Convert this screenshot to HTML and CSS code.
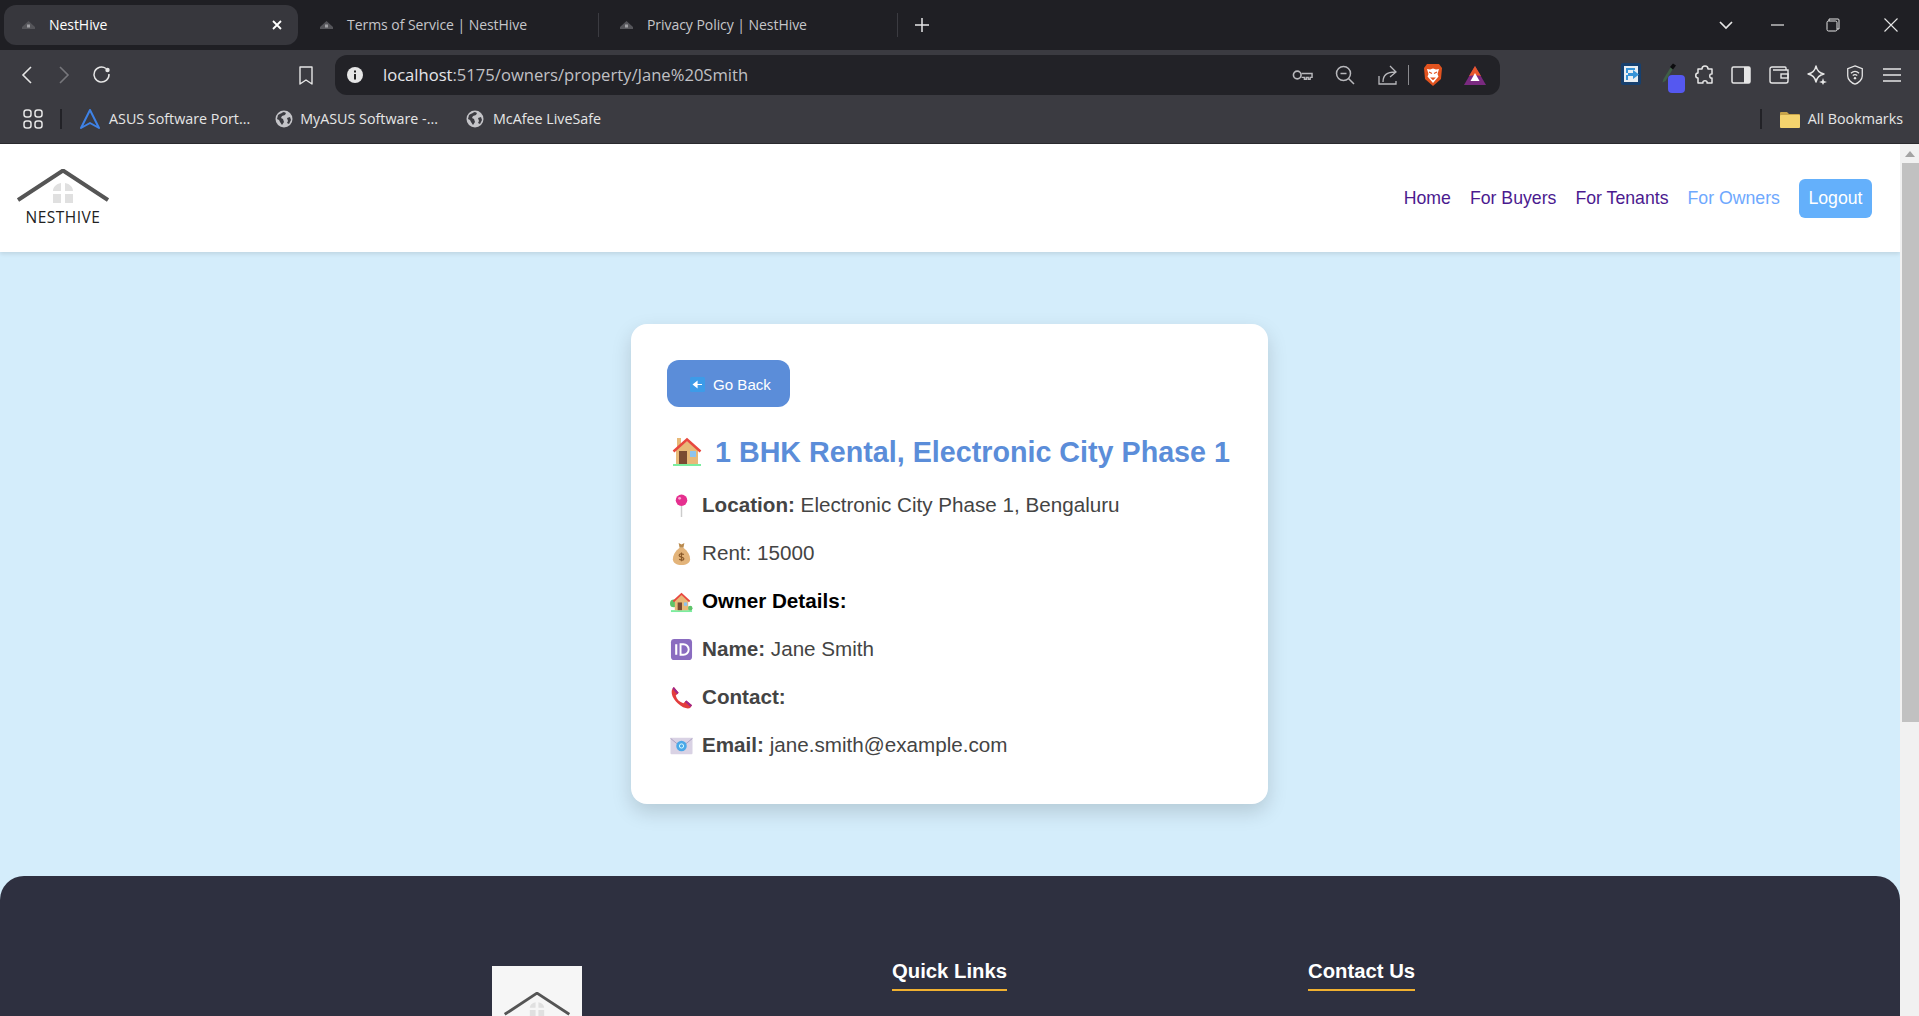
FILE: index.html
```html
<!DOCTYPE html>
<html>
<head>
	<meta charset="utf-8">
	<title>NestHive</title>
	<link rel="stylesheet" href="styles.css">
</head>
<body>
	<svg class="defs" width="0" height="0">
		<symbol id="fav" viewBox="0 0 13 10">
			<path d="M0 7 6.500 1 13 7v2H0z" fill="#55555a"/>
			<rect x="5" y="4.500" width="3" height="3" fill="#a0a0a4"/>
		</symbol>
		<symbol id="globe" viewBox="0 0 18 18">
			<circle cx="9" cy="9" r="8.5" fill="#c4c4c8"/>
			<path d="M3 5c2-1 5-3 6-3l2 1-1 2-3 1-1 2 2 1 1 3-2 3-2-3-1-2-2-1zM12 8l3-1 1 3-2 4-2-1 1-2z" fill="#3b3b41"/>
		</symbol>
		<symbol id="roof" viewBox="0 0 92 36">
			<path d="M1 31 46 1.500l45 29.500" fill="none" stroke="#555" stroke-width="4"/>
			<path d="M36 22c0-4 3-7 8-8v8zM48 14c5 1 8 4 8 8h-8zM36 25h8v9h-8zM48 25h8v9h-8z" fill="#e0e0e0"/>
		</symbol>
	</svg>

	<!-- browser chrome -->
	<div class="tabstrip">
		<div class="tab tab-active">
			<svg class="fav"><use href="#fav"/></svg>
			<span class="tab-title">NestHive</span>
			<svg class="tab-x" viewBox="0 0 10 10"><path d="M1 1l8 8M9 1l-8 8" stroke="#fff" stroke-width="1.8"/></svg>
		</div>
		<div class="tab tab-one">
			<svg class="fav"><use href="#fav"/></svg>
			<span class="tab-title">Terms of Service | NestHive</span>
		</div>
		<div class="tab tab-two">
			<svg class="fav"><use href="#fav"/></svg>
			<span class="tab-title">Privacy Policy | NestHive</span>
		</div>
		<svg class="newtab" viewBox="0 0 14 14"><path d="M7 0v14M0 7h14" stroke="#e6e6e6" stroke-width="1.5"/></svg>
		<svg class="win win-chev" viewBox="0 0 14 10"><path d="M1 2l6 6 6-6" fill="none" stroke="#e6e6e6" stroke-width="1.7"/></svg>
		<svg class="win win-min" viewBox="0 0 14 10"><path d="M0 5h13" stroke="#e6e6e6" stroke-width="1.2"/></svg>
		<svg class="win win-res" viewBox="0 0 14 14"><path d="M3 3V1h9a1 1 0 0 1 1 1v9h-2" fill="none" stroke="#e6e6e6"/><rect x="1" y="3" width="10" height="10" rx="1.5" fill="none" stroke="#e6e6e6"/></svg>
		<svg class="win win-close" viewBox="0 0 14 14"><path d="M.5.5l13 13M13.500.5l-13 13" stroke="#e6e6e6" stroke-width="1.1"/></svg>
	</div>

	<div class="toolbar">
		<svg class="nav-ico nav-back" viewBox="0 0 12 20"><path d="M10 2 2 10l8 8" fill="none" stroke="#e6e6e6" stroke-width="1.6"/></svg>
		<svg class="nav-ico nav-fwd" viewBox="0 0 12 20"><path d="M2 2l8 8-8 8" fill="none" stroke="#77777c" stroke-width="1.6"/></svg>
		<svg class="nav-reload" viewBox="0 0 20 20"><path d="M17 9a7.500 7.500 0 1 1-3-5.500" fill="none" stroke="#e6e6e6" stroke-width="1.5"/><circle cx="15.500" cy="5" r="2.200" fill="#e6e6e6"/></svg>
		<svg class="nav-mark" viewBox="0 0 14 19"><path d="M1 1h12v17l-6-4-6 4z" fill="none" stroke="#e6e6e6" stroke-width="1.4" stroke-linejoin="round"/></svg>
		<div class="urlbar">
			<svg class="url-info" viewBox="0 0 18 18"><circle cx="9" cy="9" r="8" fill="#e6e6e6"/><path d="M9 8v5.500M9 4.500v2" stroke="#222" stroke-width="2"/></svg>
			<span class="url-text"><span class="url-host">localhost</span>:5175/owners/property/Jane%20Smith</span>
			<svg class="url-ico url-key" viewBox="0 0 22 14"><circle cx="5.500" cy="7" r="4" fill="none" stroke="#b8b8bc" stroke-width="1.7"/><path d="M10 5.500h11v4h-2v2h-2v-2h-2v2h-2v-2h-3" fill="none" stroke="#b8b8bc" stroke-width="1.500"/></svg>
			<svg class="url-ico url-zoom" viewBox="0 0 20 20"><circle cx="8.500" cy="8.500" r="7" fill="none" stroke="#b8b8bc" stroke-width="1.500"/><path d="M5.500 8.500h6M13.500 13.500l5.500 5.500" stroke="#b8b8bc" stroke-width="1.500"/></svg>
			<svg class="url-ico url-share" viewBox="0 0 20 20"><path d="M1 11v8h17v-3" fill="none" stroke="#b8b8bc" stroke-width="1.300"/><path d="M5 17c0-7 4-10 12-10M12 1l6 6-6 5" fill="none" stroke="#b8b8bc" stroke-width="1.300"/></svg>
			<span class="url-sep"></span>
			<svg class="url-brave" viewBox="0 0 20 24"><path d="M4 1h12l3 4-1 11-8 7-8-7L1 5z" fill="#e2531f"/><path d="M4 6l3 .500 3-1 3 1 3-.500-1.500 5 1 2.500L10 20l-5.500-6.500 1-2.500z" fill="#fff"/><path d="M6 9l3 1.500M14 9l-3 1.500M8.500 15h3l-1.500 1.500z" stroke="#e2531f" stroke-width="1.200" fill="#e2531f"/></svg>
			<svg class="url-bat" viewBox="0 0 22 20"><path d="M11 1l11 19H0z" fill="#7a2a80"/><path d="M11 1 5 11l6-1 6 1z" fill="#e8572a"/><path d="M11 8l4.500 8h-9z" fill="#fff"/></svg>
		</div>
		<svg class="ext ext-one" viewBox="0 0 20 22"><rect width="20" height="22" rx="2" fill="#17406e"/><rect x="3" y="3" width="14" height="16" fill="#e9eef2"/><path d="M5 5h9v2H7v3H5zM5 12h2v5H5z" fill="#3794d8"/><path d="M7 10h5V7l6 4.500-6 4.500v-3H7z" fill="#3794d8"/></svg>
		<div class="ext-two">
			<svg class="dropper" viewBox="0 0 16 20"><path d="M10.500 3 2.500 16l-1 3.500 3-1.500 8-13z" fill="#3f5f46"/><path d="M9 4l3-3.500 3 2-3 4z" fill="#0c0c0e"/></svg>
			<span class="dropper-chip"></span>
		</div>
		<svg class="tool tool-puzzle" viewBox="0 0 20 20"><path d="M7 4c0-4 6-4 6 0h4v5c-3-1-3 5 0 4v5h-5c1-3-5-3-4 0H3v-5c-3 0-3-5 0-5V4z" fill="none" stroke="#e6e6e6" stroke-width="1.500" stroke-linejoin="round"/></svg>
		<svg class="tool tool-side" viewBox="0 0 20 18"><rect x="1" y="1" width="18" height="16" rx="1.500" fill="none" stroke="#e6e6e6" stroke-width="1.500"/><rect x="13" y="1" width="6" height="16" fill="#e6e6e6"/></svg>
		<svg class="tool tool-wallet" viewBox="0 0 20 18"><path d="M17 4V2a1 1 0 0 0-1-1H3a2 2 0 0 0-2 2v12a2 2 0 0 0 2 2h14a2 2 0 0 0 2-2V4H4" fill="none" stroke="#e6e6e6" stroke-width="1.400"/><rect x="12" y="8" width="7" height="4" fill="none" stroke="#e6e6e6" stroke-width="1.400"/></svg>
		<svg class="tool tool-star" viewBox="0 0 20 20"><path d="M9 1c1 5 3 7 8 8-5 1-7 3-8 8-1-5-3-7-8-8 5-1 7-3 8-8z" fill="none" stroke="#e6e6e6" stroke-width="1.400" stroke-linejoin="round"/><path d="M16 13l1 3 3 1-3 1-1 2-1-2-3-1 3-1z" fill="#e6e6e6"/></svg>
		<svg class="tool tool-shield" viewBox="0 0 20 22"><path d="M10 1l8 3v8c0 4-4 8-8 9-4-1-8-5-8-9V4z" fill="none" stroke="#e6e6e6" stroke-width="1.400"/><path d="M5.500 9c3-2.500 6-2.500 9 0M7.500 11.500c2-1.500 3-1.500 5 0" fill="none" stroke="#e6e6e6" stroke-width="1.300"/><circle cx="10" cy="14.500" r="1.300" fill="#e6e6e6"/></svg>
		<svg class="tool tool-menu" viewBox="0 0 18 14"><path d="M0 1h18M0 7h18M0 13h18" stroke="#e6e6e6" stroke-width="1.300"/></svg>
	</div>

	<div class="bookmarks">
		<svg class="apps" viewBox="0 0 20 20"><g fill="none" stroke="#e6e6e6" stroke-width="1.500"><rect x="1" y="1" width="7" height="7" rx="2.500"/><rect x="12" y="1" width="7" height="7" rx="2.500"/><rect x="1" y="12" width="7" height="7" rx="2.500"/><rect x="12" y="12" width="7" height="7" rx="2.500"/></g></svg>
		<span class="bm-sep"></span>
		<svg class="bm-ico bm-asus" viewBox="0 0 20 20"><path d="M10 1l9 18-9-5-9 5z" fill="none" stroke="#3f82e6" stroke-width="2" stroke-linejoin="round"/></svg>
		<span class="bm-text">ASUS Software Port...</span>
		<svg class="bm-ico bm-globe"><use href="#globe"/></svg>
		<span class="bm-text">MyASUS Software -...</span>
		<svg class="bm-ico bm-globe bm-globe-last"><use href="#globe"/></svg>
		<span class="bm-text">McAfee LiveSafe</span>
		<span class="bm-spacer"></span>
		<span class="bm-sep bm-sep-right"></span>
		<svg class="bm-ico bm-folder" viewBox="0 0 20 17"><path d="M0 2a1 1 0 0 1 1-1h6l2 2h10a1 1 0 0 1 1 1v12H0z" fill="#c8a44a"/><rect y="4" width="20" height="13" rx="1" fill="#f4d36e"/></svg>
		<span class="bm-text bm-all">All Bookmarks</span>
	</div>

	<!-- page -->
	<div class="viewport">
		<div class="page">
			<header class="site-header">
				<div class="logo">
					<svg class="logo-roof"><use href="#roof"/></svg>
					<span class="logo-name">NESTHIVE</span>
				</div>
				<nav class="site-nav">
					<a class="nav-link">Home</a>
					<a class="nav-link">For Buyers</a>
					<a class="nav-link">For Tenants</a>
					<a class="nav-link nav-current">For Owners</a>
					<a class="logout">Logout</a>
				</nav>
			</header>

			<main class="site-main">
				<section class="card">
					<button class="go-back">
						<svg class="back-ico" viewBox="0 0 15 15"><rect width="15" height="15" rx="1.500" fill="#3d9be8"/><path d="M12 7.500H5M7 4.800 3.500 7.500 7 10.200z" fill="#fff" stroke="#fff" stroke-width="1.200"/></svg>
						Go Back
					</button>
					<h1 class="title">
						<svg class="title-ico" viewBox="0 0 30 30">
							<rect x="5" y="1" width="4" height="9" fill="#e8b978"/>
							<path d="M4 13 15 4l11 9v14H4z" fill="#e8b978"/>
							<path d="M1.500 14.500 15 2.500l13.500 12" fill="none" stroke="#e8483f" stroke-width="2.500"/>
							<rect x="7" y="14" width="8" height="13" fill="#7a4a32"/>
							<rect x="18" y="14" width="6" height="6" fill="#8fc4ee"/>
							<rect x="1" y="27" width="28" height="2" fill="#7bed9f"/>
						</svg>
						1 BHK Rental, Electronic City Phase 1
					</h1>
					<p class="row">
						<span class="slot"><svg class="emoji" viewBox="0 0 24 24"><path d="M12 12v12" stroke="#ccc" stroke-width="1.500"/><circle cx="12" cy="6.500" r="6" fill="#e5308f"/><circle cx="10" cy="4.500" r="1.500" fill="#f8a8d0"/></svg></span>
						<span><b>Location:</b> Electronic City Phase 1, Bengaluru</span>
					</p>
					<p class="row">
						<span class="slot"><svg class="emoji" viewBox="0 0 24 24"><path d="M9 1l3 1.500L15 1l-1 5h-4z" fill="#b98a4e"/><path d="M10 6h4c5 4 7 8 7 12 0 4-4 6-9 6s-9-2-9-6c0-4 2-8 7-12z" fill="#e3b47a"/><path d="M12 11v9M14.500 13c-2-1-5-1-5 1s5 1.500 5 3.500-3 1.500-5 .5" fill="none" stroke="#8a5a2a" stroke-width="1.200"/></svg></span>
						<span>Rent: 15000</span>
					</p>
					<p class="row row-owner">
						<span class="slot"><svg class="emoji" viewBox="0 0 24 24"><circle cx="4" cy="14" r="4" fill="#5fc46a"/><rect x="1" y="21" width="22" height="2" fill="#7bed9f"/><circle cx="21" cy="19" r="2.500" fill="#5fc46a"/><path d="M5 11l7-6 7 6v10H5z" fill="#e8b978"/><path d="M3.500 12 12 4l8.500 8" fill="none" stroke="#e8483f" stroke-width="1.800"/><rect x="8" y="13" width="4.500" height="8" fill="#7a4a32"/><rect x="14.500" y="13" width="3.500" height="3.500" fill="#8fc4ee"/></svg></span>
						<span><b>Owner Details:</b></span>
					</p>
					<p class="row">
						<span class="slot"><svg class="emoji" viewBox="0 0 24 24"><rect x="1" y="1" width="22" height="22" rx="3.500" fill="#8a6cc0"/><path d="M6.500 6.500v11" stroke="#fff" stroke-width="2.200"/><path d="M11 6.500h3a5.500 5.500 0 0 1 0 11h-3z" fill="none" stroke="#fff" stroke-width="2"/></svg></span>
						<span><b>Name:</b> Jane Smith</span>
					</p>
					<p class="row">
						<span class="slot"><svg class="emoji" viewBox="0 0 24 24"><path d="M4 1 9 7 6 10c1 4 4 7 8 8l3-3 6 5-2 3c-3 1-8 0-13-5S1 9 2 4z" fill="#e23d3d"/><path d="M4 1 9 7 7.500 8.500 2.500 2.500zM17 15l6 5-1.500 2-6-5.500z" fill="#a0268a"/></svg></span>
						<span><b>Contact:</b></span>
					</p>
					<p class="row">
						<span class="slot"><svg class="emoji" viewBox="0 0 24 24"><rect x=".5" y="4" width="23" height="17" rx="1" fill="#d9d2e4"/><path d="M.5 4.500 12 14 23.500 4.500" fill="none" stroke="#aaa0c0" stroke-width="1"/><circle cx="12" cy="12.500" r="5.500" fill="#4aa8e8"/><circle cx="12" cy="12.500" r="2.200" fill="none" stroke="#dff" stroke-width="1"/></svg></span>
						<span><b>Email:</b> jane.smith@example.com</span>
					</p>
				</section>
			</main>

			<footer class="site-footer">
				<div class="foot-col foot-logo-col">
					<div class="foot-logo"><svg class="foot-roof"><use href="#roof"/></svg></div>
				</div>
				<div class="foot-col foot-links-col">
					<h3 class="foot-head">Quick Links</h3>
				</div>
				<div class="foot-col">
					<h3 class="foot-head">Contact Us</h3>
				</div>
			</footer>
		</div>

		<div class="scrollbar">
			<div class="scroll-up"><span class="scroll-arrow"></span></div>
			<div class="scroll-thumb"></div>
		</div>
	</div>
</body>
</html>
```

FILE: styles.css
```css
html, body {
	margin: 0;
	padding: 0;
	height: 100%;
	overflow: hidden;
}
body {
	display: flex;
	flex-direction: column;
	font-family: "Liberation Sans", Arial, sans-serif;
	background: #fff;
}
.defs {
	position: absolute;
}
svg {
	display: block;
	flex: none;
}

/* tab strip */
.tabstrip {
	height: 50px;
	flex: none;
	display: flex;
	align-items: center;
	background: #1f1f24;
	font-family: "Open Sans", sans-serif;
	font-size: 14px;
	letter-spacing: -0.05px;
}
.tab {
	height: 40px;
	display: flex;
	align-items: center;
	box-sizing: border-box;
	color: #c6c6ca;
}
.tab-active {
	width: 294px;
	margin-left: 4px;
	padding-left: 18px;
	background: #37373d;
	border-radius: 12px;
	color: #fff;
}
.tab-one {
	width: 301px;
	padding-left: 22px;
	border-right: 1px solid #3b3b41;
	height: 24px;
}
.tab-two {
	width: 299px;
	padding-left: 21px;
	border-right: 1px solid #3b3b41;
	height: 24px;
}
.fav {
	width: 13px;
	height: 10px;
	margin-right: 14px;
}
.tab-title {
	flex: 1;
	margin-top: -2px;
}
.tab-x {
	width: 10px;
	height: 10px;
	margin-right: 16px;
}
.newtab {
	width: 14px;
	height: 14px;
	margin-left: 17px;
}
.win {
	height: 14px;
	width: 14px;
}
.win-chev {
	margin-left: 790px;
}
.win-min {
	margin-left: 38px;
}
.win-res {
	margin-left: 41px;
}
.win-close {
	margin-left: 44px;
}

/* toolbar */
.toolbar {
	height: 45px;
	flex: none;
	display: flex;
	align-items: flex-end;
	background: #3b3b41;
	box-sizing: border-box;
}
.toolbar > svg, .ext-two {
	margin-bottom: 10px;
}
.nav-ico {
	width: 12px;
	height: 20px;
}
.nav-back {
	margin-left: 21px;
}
.nav-fwd {
	margin-left: 25px;
}
.nav-reload {
	width: 20px;
	height: 20px;
	margin-left: 22px;
}
.nav-mark {
	width: 14px;
	height: 19px;
	margin-left: 187px;
}
.urlbar {
	width: 1165px;
	height: 40px;
	margin-left: 22px;
	display: flex;
	align-items: center;
	background: #222227;
	border-radius: 12px;
	box-sizing: border-box;
}
.url-info {
	width: 18px;
	height: 18px;
	margin-left: 11px;
}
.url-text {
	margin-left: 19px;
	margin-top: -2px;
	width: 908px;
	font-family: "Open Sans", sans-serif;
	font-size: 16.6px;
	color: #c0c0c4;
}
.url-host {
	color: #e6e6ea;
}
.url-key {
	width: 21px;
	height: 14px;
	margin-left: 1px;
}
.url-zoom {
	width: 20px;
	height: 20px;
	margin-left: 22px;
}
.url-share {
	width: 20px;
	height: 20px;
	margin-left: 23px;
}
.url-sep {
	width: 1px;
	height: 20px;
	margin-left: 10px;
	background: #8a8a8e;
}
.url-brave {
	width: 20px;
	height: 24px;
	margin-left: 14px;
}
.url-bat {
	width: 22px;
	height: 20px;
	margin-left: 21px;
}
.ext-one {
	width: 20px;
	height: 22px;
	margin-left: 121px;
}
.ext-two {
	position: relative;
	width: 20px;
	height: 22px;
	margin-left: 20px;
}
.dropper {
	width: 16px;
	height: 20px;
}
.dropper-chip {
	position: absolute;
	left: 7px;
	top: 12px;
	width: 17px;
	height: 18px;
	border-radius: 4px;
	background: #5558f0;
}
.tool {
	width: 20px;
	height: 20px;
}
.tool-puzzle {
	margin-left: 14px;
}
.tool-side {
	margin-left: 16px;
}
.tool-wallet {
	margin-left: 18px;
}
.tool-star {
	margin-left: 18px;
}
.tool-shield {
	margin-left: 18px;
}
.tool-menu {
	width: 18px;
	margin-left: 18px;
}

/* bookmarks bar */
.bookmarks {
	height: 49px;
	flex: none;
	display: flex;
	align-items: center;
	background: #3b3b41;
	border-bottom: 1px solid #2a2a2e;
	box-sizing: border-box;
	font-family: "Open Sans", sans-serif;
	font-size: 14.3px;
	color: #e6e6e6;
}
.bm-text {
	margin-top: -2px;
}
.apps {
	width: 20px;
	height: 20px;
	margin-left: 23px;
}
.bm-sep {
	width: 2px;
	height: 20px;
	margin-left: 17px;
	background: #222227;
}
.bm-ico {
	width: 18px;
	height: 18px;
}
.bm-asus {
	width: 20px;
	height: 20px;
	margin-left: 18px;
	margin-right: 9px;
}
.bm-globe {
	margin-left: 25px;
	margin-right: 7px;
}
.bm-globe-last {
	margin-left: 28px;
	margin-right: 9px;
}
.bm-spacer {
	flex: 1;
}
.bm-folder {
	width: 20px;
	height: 17px;
	margin-left: 18px;
	margin-right: 8px;
}
.bm-all {
	margin-right: 16px;
}

/* page area */
.viewport {
	flex: 1;
	min-height: 0;
	display: flex;
}
.page {
	flex: 1;
	min-width: 0;
	overflow: hidden;
	background: #d4edfb;
}
.site-header {
	height: 108px;
	display: flex;
	align-items: center;
	justify-content: space-between;
	padding: 0 28px 0 17px;
	background: #fff;
	box-shadow: 0 2px 4px rgba(0,0,0,0.1);
	position: relative;
}
.logo {
	display: flex;
	flex-direction: column;
	align-items: center;
	width: 92px;
}
.logo-roof {
	width: 92px;
	height: 36px;
}
.logo-name {
	font-family: "Open Sans", sans-serif;
	font-size: 15.5px;
	letter-spacing: 0.5px;
	line-height: 20px;
	color: #222;
	margin-top: 2px;
}
.site-nav {
	display: flex;
	align-items: center;
	gap: 19px;
	font-size: 17.7px;
}
.nav-link {
	color: #4b1a8f;
}
.nav-current {
	color: #6ea8fe;
}
.logout {
	padding: 9px 9.5px;
	border-radius: 6px;
	background: #64b0fb;
	color: #fff;
	line-height: 21px;
}
.site-main {
	padding: 72px 0;
	display: flex;
	justify-content: center;
}
.card {
	width: 637px;
	height: 480px;
	margin-right: 1px;
	box-sizing: border-box;
	padding: 36px;
	background: #fff;
	border-radius: 16px;
	box-shadow: 0 8px 20px rgba(0,0,0,0.15);
	color: #444;
}
.go-back {
	display: flex;
	align-items: center;
	gap: 8px;
	width: 123px;
	height: 47px;
	padding: 1px 0 0 23px;
	border: 0;
	border-radius: 12px;
	background: #5b8dd9;
	color: #fff;
	font-family: inherit;
	font-size: 15.1px;
}
.back-ico {
	width: 15px;
	height: 15px;
}
.title {
	display: flex;
	align-items: center;
	gap: 13px;
	height: 40px;
	margin: 25px 0 9px;
	color: #5b8dd9;
	font-size: 28.7px;
	white-space: nowrap;
}
.title-ico {
	width: 30px;
	height: 30px;
	margin-left: 5px;
}
.row {
	display: flex;
	align-items: center;
	gap: 6px;
	height: 48px;
	margin: 0;
	font-size: 20.65px;
	white-space: pre-wrap;
}
.row-owner {
	color: #000;
}
.slot {
	width: 29px;
	display: flex;
	justify-content: center;
}
.emoji {
	width: 23px;
	height: 23px;
}
.site-footer {
	height: 400px;
	display: flex;
	padding: 84px 0 0 492px;
	background: #2e3040;
	border-radius: 24px 24px 0 0;
	color: #fff;
}
.foot-logo-col {
	width: 400px;
}
.foot-links-col {
	width: 416px;
}
.foot-logo {
	width: 90px;
	height: 90px;
	margin-top: 6px;
	padding-top: 26px;
	box-sizing: border-box;
	background: #f6f6f6;
}
.foot-roof {
	width: 66px;
	height: 26px;
	margin-left: 12px;
}
.foot-head {
	display: inline-block;
	margin: 0;
	padding-bottom: 6px;
	border-bottom: 2px solid #f0b030;
	font-size: 20.3px;
	line-height: 23px;
}

/* page scrollbar */
.scrollbar {
	width: 19px;
	flex: none;
	background: #f1f1f1;
}
.scroll-up {
	height: 19px;
	display: flex;
	justify-content: center;
	align-items: center;
}
.scroll-arrow {
	width: 0;
	height: 0;
	border-left: 5px solid transparent;
	border-right: 5px solid transparent;
	border-bottom: 6px solid #a3a3a3;
}
.scroll-thumb {
	height: 559px;
	margin-left: 2px;
	background: #c1c1c1;
}
```
